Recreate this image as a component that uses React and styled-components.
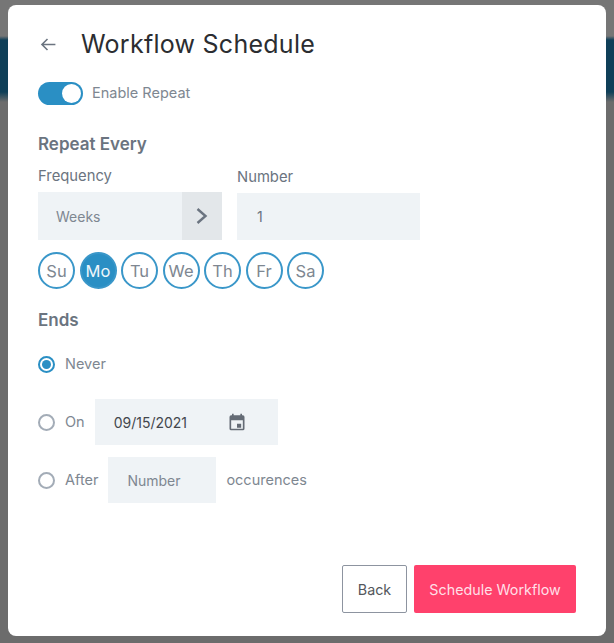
import React from "react";
import styled, { createGlobalStyle } from "styled-components";

const Global = createGlobalStyle`
  html, body { margin: 0; padding: 0; height: 643px; overflow: hidden; }
  body {
    font-family: "Inter", "Liberation Sans", sans-serif;
    background: linear-gradient(180deg, #767676 0, #767676 36px, #0f3f58 40px, #0f3f58 92px, #6c6c6c 102px, #6c6c6c 100%);
  }
`;

const Modal = styled.main`
  box-sizing: border-box;
  width: 598px;
  height: 631px;
  margin: 5px 0 0 8px;
  padding: 23px 30px 23px;
  background: #fff;
  border-radius: 8px;
  display: flex;
  flex-direction: column;
`;

const Header = styled.header`
  display: flex;
  align-items: center;
  gap: 24px;
  height: 32px;
  color: #2b2d31;
`;

const Title = styled.h1`
  margin: 0;
  font-size: 25px;
  line-height: 32px;
  font-weight: 400;
  letter-spacing: 0.26px;
`;

const BackIcon = styled.svg`
  width: 19px;
  height: 19px;
  color: #6b7480;
`;

const ToggleRow = styled.div`
  display: flex;
  align-items: center;
  gap: 9px;
  margin-top: 21px;
  height: 24px;
`;

const Toggle = styled.span`
  box-sizing: border-box;
  width: 45px;
  height: 23px;
  border-radius: 12px;
  background: #2a8fc4;
  display: flex;
  justify-content: flex-end;
  align-items: center;
  padding-right: 2px;
`;

const Knob = styled.span`
  width: 19px;
  height: 19px;
  border-radius: 50%;
  background: #fff;
`;

const Muted = styled.span`
  font-size: 14.5px;
  line-height: 20px;
  color: #7e8791;
`;

const SectionTitle = styled.h2`
  margin: ${(p) => p.$top}px 0 0;
  font-size: 17px;
  line-height: 22px;
  font-weight: 600;
  color: #6b7480;
`;

const Fields = styled.div`
  display: flex;
  gap: 15px;
  margin-top: 11px;
`;

const Field = styled.div`
  display: flex;
  flex-direction: column;
  gap: 6px;
  padding-top: ${(p) => p.$pad}px;
`;

const FieldLabel = styled.label`
  font-size: 14.8px;
  line-height: 20px;
  color: #6b7480;
`;

const Select = styled.div`
  display: flex;
  width: 184px;
  height: 48px;
  background: #eff3f6;
`;

const SelectValue = styled.span`
  flex: 1;
  display: flex;
  align-items: center;
  padding-left: 18px;
  font-size: 14px;
  color: #7e8791;
`;

const SelectArrow = styled.span`
  width: 40px;
  background: #e3e7ea;
  display: flex;
  align-items: center;
  justify-content: center;
  color: #6b7480;
`;

const Input = styled.div`
  box-sizing: border-box;
  width: ${(p) => p.$w}px;
  height: ${(p) => p.$h || 46}px;
  background: #eff3f6;
  display: flex;
  align-items: center;
  justify-content: ${(p) => (p.$between ? "space-between" : "flex-start")};
  padding: 0 ${(p) => p.$right || 0}px 0 ${(p) => p.$left}px;
  font-size: 14px;
  color: ${(p) => p.$color};
`;

const Days = styled.div`
  display: flex;
  gap: 4.5px;
  margin-top: 12px;
`;

const Day = styled.span`
  box-sizing: border-box;
  width: 37px;
  height: 37px;
  border-radius: 50%;
  border: 2px solid #3a97c9;
  background: ${(p) => (p.$on ? "#2a8fc4" : "#fff")};
  color: ${(p) => (p.$on ? "#eef6fb" : "#7e8791")};
  font-size: 16.5px;
  display: flex;
  align-items: center;
  justify-content: center;
`;

const Options = styled.div`
  display: flex;
  flex-direction: column;
  margin-top: 23px;
`;

const Option = styled.div`
  display: flex;
  align-items: center;
  gap: 10px;
  height: ${(p) => p.$h}px;
  margin-bottom: ${(p) => p.$mb}px;
`;

const Radio = styled.span`
  box-sizing: border-box;
  width: 17px;
  height: 17px;
  border-radius: 50%;
  border: 2px solid ${(p) => (p.$on ? "#2a8fc4" : "#a3acb7")};
  display: flex;
  align-items: center;
  justify-content: center;
  &::after {
    content: "";
    display: ${(p) => (p.$on ? "block" : "none")};
    width: 9px;
    height: 9px;
    border-radius: 50%;
    background: #2a8fc4;
  }
`;

const Footer = styled.footer`
  margin-top: auto;
  display: flex;
  justify-content: flex-end;
  gap: 7px;
`;

const Button = styled.button`
  box-sizing: border-box;
  height: 48px;
  width: ${(p) => p.$w}px;
  border-radius: 2px;
  border: ${(p) => (p.$primary ? "none" : "1px solid #8d94a0")};
  background: ${(p) => (p.$primary ? "#ff416c" : "#fff")};
  color: ${(p) => (p.$primary ? "#ffdfe6" : "#54575c")};
  font-family: inherit;
  font-size: 14.3px;
  padding: 0;
`;

const days = ["Su", "Mo", "Tu", "We", "Th", "Fr", "Sa"];

export default function App() {
  return (
    <>
      <Global />
      <Modal>
        <Header>
          <BackIcon viewBox="0 0 24 24" fill="none" stroke="currentColor" strokeWidth="2">
            <path d="M22 12H5M12 5l-7 7 7 7" />
          </BackIcon>
          <Title>Workflow Schedule</Title>
        </Header>
        <ToggleRow>
          <Toggle><Knob /></Toggle>
          <Muted>Enable Repeat</Muted>
        </ToggleRow>
        <SectionTitle $top={28}>Repeat Every</SectionTitle>
        <Fields>
          <Field $pad={0}>
            <FieldLabel>Frequency</FieldLabel>
            <Select>
              <SelectValue>Weeks</SelectValue>
              <SelectArrow>
                <svg width="16" height="20" viewBox="0 0 16 20" fill="none" stroke="currentColor" strokeWidth="2.4">
                  <path d="M3.5 3l8 7-8 7" />
                </svg>
              </SelectArrow>
            </Select>
          </Field>
          <Field $pad={1}>
            <FieldLabel>Number</FieldLabel>
            <Input $w={183} $h={47} $left={20} $color="#6b7480">1</Input>
          </Field>
        </Fields>
        <Days>
          {days.map((d) => (
            <Day key={d} $on={d === "Mo"}>{d}</Day>
          ))}
        </Days>
        <SectionTitle $top={20}>Ends</SectionTitle>
        <Options>
          <Option $h={20} $mb={25}>
            <Radio $on />
            <Muted>Never</Muted>
          </Option>
          <Option $h={46} $mb={12}>
            <Radio />
            <Muted>On</Muted>
            <Input $w={183} $left={19} $right={31} $between $color="#43474d">
              09/15/2021
              <svg width="20" height="20" viewBox="0 0 24 24" fill="#646b75">
                <path d="M19 4h-1V2h-2v2H8V2H6v2H5a2 2 0 0 0-2 2v14a2 2 0 0 0 2 2h14a2 2 0 0 0 2-2V6a2 2 0 0 0-2-2zm0 16H5V10h14v10zm-7-6h5v5h-5z" />
              </svg>
            </Input>
          </Option>
          <Option $h={46} $mb={0}>
            <Radio />
            <Muted>After</Muted>
            <Input $w={108} $left={19} $color="#7e8791">Number</Input>
            <Muted>occurences</Muted>
          </Option>
        </Options>
        <Footer>
          <Button $w={65}>Back</Button>
          <Button $primary $w={162}>Schedule Workflow</Button>
        </Footer>
      </Modal>
    </>
  );
}
